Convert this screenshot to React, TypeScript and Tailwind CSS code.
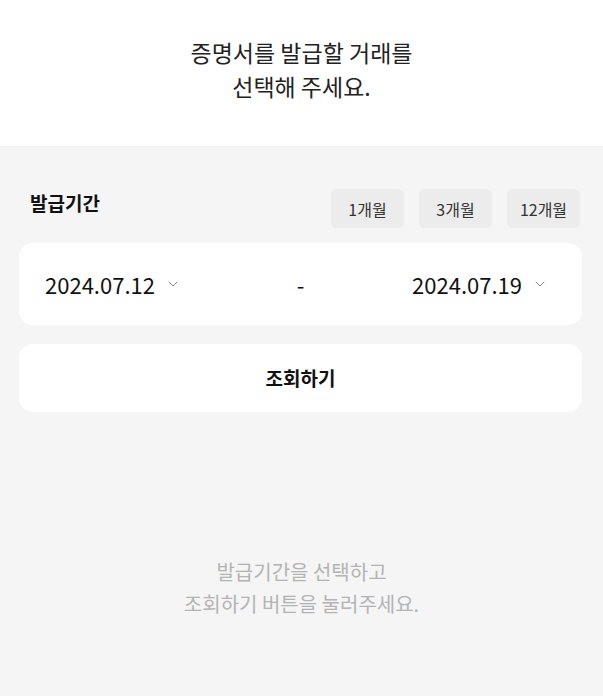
import { ChevronDown } from 'lucide-react';

const font = { fontFamily: '"Noto Sans CJK KR", "Noto Sans", sans-serif' };

export default function App() {
  const periods = ['1개월', '3개월', '12개월'];

  return (
    <div className="w-[603px] h-[696px] bg-[#f5f5f5] flex flex-col overflow-hidden" style={font}>
      {/* Header */}
      <div className="bg-white h-[146px] flex flex-col items-center justify-center text-[23px] leading-[34px] text-[#222] pb-[8px]">
        <p>증명서를 발급할 거래를</p>
        <p>선택해 주세요.</p>
      </div>

      <div className="pl-[19px] pr-[21px] pt-[43px]">
        {/* Period selector */}
        <div className="flex items-center justify-between pl-[11px] pr-[2px]">
          <span className="text-[19px] font-bold text-[#111] -mt-[10px]">발급기간</span>
          <div className="flex gap-[15px]">
            {periods.map((p) => (
              <button
                key={p}
                className="w-[73px] h-[39px] rounded-[6px] bg-[#ececec] text-[16px] text-[#333] flex items-center justify-center"
              >
                {p}
              </button>
            ))}
          </div>
        </div>

        {/* Date range */}
        <div className="mt-[15px] h-[82px] bg-white rounded-[14px] flex items-center pl-[26px] pr-[34px]">
          <div className="flex-1 flex items-center gap-[10px]">
            <span className="text-[22px] text-[#111]">2024.07.12</span>
            <ChevronDown size={16} strokeWidth={1.5} className="text-[#888]" />
          </div>
          <span className="text-[22px] text-[#111] ml-[8px]">-</span>
          <div className="flex-1 flex items-center justify-end gap-[10px]">
            <span className="text-[22px] text-[#111]">2024.07.19</span>
            <ChevronDown size={16} strokeWidth={1.5} className="text-[#888]" />
          </div>
        </div>

        {/* Search button */}
        <button className="mt-[19px] w-full h-[68px] bg-white rounded-[14px] text-[19px] font-bold text-[#111] flex items-center justify-center">
          조회하기
        </button>
      </div>

      {/* Empty state */}
      <div className="mt-[144px] flex flex-col items-center text-[20px] leading-[32px] text-[#b3b3b3]">
        <p>발급기간을 선택하고</p>
        <p>조회하기 버튼을 눌러주세요.</p>
      </div>
    </div>
  );
}
